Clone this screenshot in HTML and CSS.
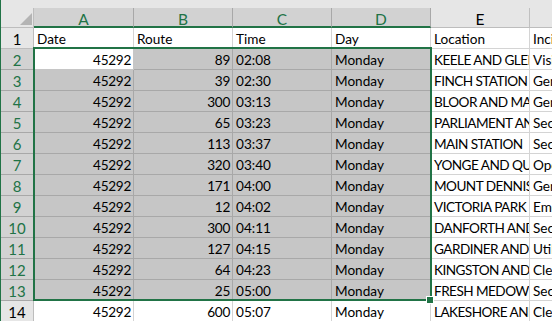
FILE: index.html
```html
<!DOCTYPE html>
<html>
<head>
<meta charset="utf-8">
<link rel="stylesheet" href="styles.css">
</head>
<body>
<div class="window">
  <div class="strip"></div>
  <div class="grid">
    <div class="corner"><span class="tri"></span></div>
    <div class="ch on">A</div><div class="ch on">B</div><div class="ch on">C</div><div class="ch on">D</div><div class="ch">E</div><div class="ch">F</div>

    <div class="rh">1</div><div class="c">Date</div><div class="c">Route</div><div class="c">Time</div><div class="c">Day</div><div class="c">Location</div><div class="c">Incident</div>

    <div class="rh on">2</div><div class="c n act">45292</div><div class="c n s">89</div><div class="c s">02:08</div><div class="c s">Monday</div><div class="c loc">KEELE AND GLENCAIRN</div><div class="c">Vision</div>
    <div class="rh on">3</div><div class="c n s">45292</div><div class="c n s">39</div><div class="c s">02:30</div><div class="c s">Monday</div><div class="c loc">FINCH STATION</div><div class="c">General Delay</div>
    <div class="rh on">4</div><div class="c n s">45292</div><div class="c n s">300</div><div class="c s">03:13</div><div class="c s">Monday</div><div class="c loc">BLOOR AND MAIN</div><div class="c">General Delay</div>
    <div class="rh on">5</div><div class="c n s">45292</div><div class="c n s">65</div><div class="c s">03:23</div><div class="c s">Monday</div><div class="c loc">PARLIAMENT AND KING</div><div class="c">Security</div>
    <div class="rh on">6</div><div class="c n s">45292</div><div class="c n s">113</div><div class="c s">03:37</div><div class="c s">Monday</div><div class="c loc">MAIN STATION</div><div class="c">Security</div>
    <div class="rh on">7</div><div class="c n s">45292</div><div class="c n s">320</div><div class="c s">03:40</div><div class="c s">Monday</div><div class="c loc">YONGE AND QUEENS QUAY</div><div class="c">Operations - Operator</div>
    <div class="rh on">8</div><div class="c n s">45292</div><div class="c n s">171</div><div class="c s">04:00</div><div class="c s">Monday</div><div class="c loc">MOUNT DENNIS STATION</div><div class="c">General Delay</div>
    <div class="rh on">9</div><div class="c n s">45292</div><div class="c n s">12</div><div class="c s">04:02</div><div class="c s">Monday</div><div class="c loc">VICTORIA PARK STATION</div><div class="c">Emergency Services</div>
    <div class="rh on">10</div><div class="c n s">45292</div><div class="c n s">300</div><div class="c s">04:11</div><div class="c s">Monday</div><div class="c loc">DANFORTH AND MAIN</div><div class="c">Security</div>
    <div class="rh on">11</div><div class="c n s">45292</div><div class="c n s">127</div><div class="c s">04:15</div><div class="c s">Monday</div><div class="c loc">GARDINER AND SPADINA</div><div class="c">Utilized Off Route</div>
    <div class="rh on">12</div><div class="c n s">45292</div><div class="c n s">64</div><div class="c s">04:23</div><div class="c s">Monday</div><div class="c loc">KINGSTON AND MORNINGSIDE</div><div class="c">Cleaning - Unsanitary</div>
    <div class="rh on">13</div><div class="c n s">45292</div><div class="c n s">25</div><div class="c s">05:00</div><div class="c s">Monday</div><div class="c loc">FRESH MEDOW . AND</div><div class="c">Security</div>
    <div class="rh">14</div><div class="c n">45292</div><div class="c n">600</div><div class="c">05:07</div><div class="c">Monday</div><div class="c loc">LAKESHORE AND SPADINA</div><div class="c">Cleaning - Unsanitary</div>
  </div>
  <div class="selbox"></div>
  <div class="handle"></div>
</div>
</body>
</html>
```
FILE: styles.css
```css
html, body {
  margin: 0;
  padding: 0;
  background: #ffffff;
}
body {
  width: 552px;
  height: 321px;
  overflow: hidden;
}
.window {
  position: relative;
  width: 551px;
  height: 321px;
  border-left: 1px solid #217346;
  overflow: hidden;
  font-family: Lato, "Liberation Sans", sans-serif;
  color: #000;
}
.strip {
  height: 8px;
  background: #e6e6e6;
}
.grid {
  display: grid;
  width: 628px;
  grid-template-columns: 33px 100px 99px 99px 99px 99px 99px;
  grid-template-rows: 20px repeat(14, 21px);
}
.grid > div {
  box-sizing: border-box;
  overflow: hidden;
  white-space: nowrap;
}
.corner {
  position: relative;
  background: #e6e6e6;
  border-right: 1px solid #bdbdbd;
  border-bottom: 1px solid #bdbdbd;
}
.tri {
  position: absolute;
  right: 1px;
  bottom: 2px;
  width: 0;
  height: 0;
  border-left: 12px solid transparent;
  border-bottom: 12px solid #b4b4b4;
}
.ch {
  background: #e6e6e6;
  border-right: 1px solid #c0c0c0;
  border-bottom: 1px solid #bdbdbd;
  display: flex;
  align-items: flex-end;
  justify-content: center;
  font-size: 15.5px;
  line-height: 13px;
  padding-bottom: 1px;
}
.ch.on {
  background: #d2d2d2;
  color: #217346;
  border-right-color: #a8a8a8;
  border-bottom: 2px solid #217346;
  padding-bottom: 0;
}
.rh {
  background: #e6e6e6;
  border-right: 1px solid #bdbdbd;
  border-bottom: 1px solid #bdbdbd;
  display: flex;
  align-items: center;
  justify-content: center;
  font-size: 15px;
  padding-top: 1px;
}
.rh.on {
  background: #d2d2d2;
  color: #217346;
  border-bottom-color: #a8a8a8;
}
.c {
  border-right: 1px solid #d4d4d4;
  border-bottom: 1px solid #d4d4d4;
  display: flex;
  align-items: flex-end;
  font-size: 13.6px;
  line-height: 16px;
  padding: 0 2px 1px 3px;
}
.c.loc {
  letter-spacing: -0.55px;
}
.c.n {
  justify-content: flex-end;
  letter-spacing: -0.3px;
}
.c.s {
  background: #c6c6c6;
  border-right-color: #a8a8a8;
  border-bottom-color: #a8a8a8;
}
.c.act {
  background: #ffffff;
  border-right-color: #c6c6c6;
  border-bottom-color: #c6c6c6;
}
.selbox {
  position: absolute;
  left: 32px;
  top: 47px;
  width: 399px;
  height: 254px;
  box-sizing: border-box;
  border: 2px solid #217346;
  pointer-events: none;
}
.handle {
  position: absolute;
  left: 425px;
  top: 296px;
  width: 6px;
  height: 6px;
  background: #217346;
  border: 1px solid #ffffff;
}
```
